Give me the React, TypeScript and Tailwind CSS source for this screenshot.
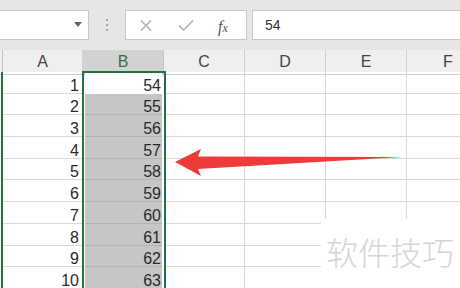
import React from "react";

const font = { fontFamily: '"Liberation Sans", Arial, sans-serif' };

const rows = [1, 2, 3, 4, 5, 6, 7, 8, 9, 10];

function Cell({ children, cls = "" }: { children?: React.ReactNode; cls?: string }) {
  return (
    <div
      className={`flex items-end justify-end border-b border-r border-[#d9d9d9] pr-[3px] text-[16px] leading-[14px] text-[#2a2a2a] ${cls}`}
    >
      {children}
    </div>
  );
}

export default function App() {
  return (
    <div className="relative h-[288px] w-[460px] overflow-hidden bg-white" style={font}>
      {/* Toolbar */}
      <div className="flex h-[50px] items-start bg-[#e6e6e6] pt-[10px]">
        <div className="relative h-[30px] w-[89px] border-y border-r border-[#c8c8c8] bg-white">
          <svg className="absolute left-[74px] top-[11px]" width="8" height="5" viewBox="0 0 8 5">
            <path d="M0 0H8L4 5Z" fill="#666" />
          </svg>
        </div>
        <div className="flex w-[36px] flex-col items-center gap-[3px] pt-[9px]">
          <div className="h-[2px] w-[2px] bg-[#a8a8a8]" />
          <div className="h-[2px] w-[2px] bg-[#a8a8a8]" />
          <div className="h-[2px] w-[2px] bg-[#a8a8a8]" />
        </div>
        <div className="relative h-[30px] w-[122px] border border-[#c8c8c8] bg-white">
          <svg className="absolute left-[14px] top-[9px]" width="12" height="11" viewBox="0 0 12 11">
            <path d="M1 0.5L11 10.5M11 0.5L1 10.5" stroke="#b4b4b4" strokeWidth="1.6" />
          </svg>
          <svg className="absolute left-[52px] top-[9px]" width="16" height="11" viewBox="0 0 16 11">
            <path d="M1 5.5L5.5 10L15 0.5" stroke="#b4b4b4" strokeWidth="1.6" fill="none" />
          </svg>
          <span
            className="absolute left-[92px] top-[4px] text-[16px] italic text-[#555]"
            style={{ fontFamily: '"Liberation Serif", "Times New Roman", serif' }}
          >
            f<span className="text-[12px]">x</span>
          </span>
        </div>
        <div className="ml-[5px] flex h-[30px] flex-1 items-center border-y border-l border-[#c8c8c8] bg-white pl-[12px] text-[14px] text-[#333]">
          54
        </div>
      </div>

      {/* Column headers */}
      <div className="grid h-[22px] grid-cols-[3px_80px_81px_81px_81px_81px_1fr] bg-[#efefef] text-[16px] text-[#444]">
        <div className="border-b border-r border-[#c6c6c6]" />
        <div className="flex items-center justify-center border-b border-r border-[#d0d0d0]">A</div>
        <div className="flex items-center justify-center border-b border-r border-[#c6c6c6] bg-[#d2d2d2] text-[#3a6e4c]">B</div>
        <div className="flex items-center justify-center border-b border-r border-[#d0d0d0]">C</div>
        <div className="flex items-center justify-center border-b border-r border-[#d0d0d0]">D</div>
        <div className="flex items-center justify-center border-b border-r border-[#d0d0d0]">E</div>
        <div className="flex items-center justify-start border-b border-[#d0d0d0] pl-[36px]">F</div>
      </div>

      {/* Rows */}
      <div className="flex flex-col">
        {rows.map((r) => (
          <div key={r} className="grid h-[21.7px] grid-cols-[3px_80px_81px_81px_81px_81px_1fr]">
            <div className="border-r-2 border-[#217346]" />
            <Cell>{r}</Cell>
            <div className="px-[2px]">
              <div
                className={`flex h-full items-end justify-end border-b pr-[1px] text-[16px] leading-[14px] text-[#2a2a2a] ${
                  r === 1 ? "border-transparent bg-white" : "border-[#b4b4b4] bg-[#c6c6c6]"
                }`}
              >
                {53 + r}
              </div>
            </div>
            <Cell />
            <Cell />
            <Cell />
            <div className="border-b border-[#d9d9d9]" />
          </div>
        ))}
      </div>

      {/* Selection border around column B */}
      <div className="pointer-events-none absolute left-[82px] top-[71px] h-[230px] w-[84px] border-2 border-[#217346]" />

      {/* Red arrow */}
      <svg className="pointer-events-none absolute left-0 top-0" width="460" height="288" viewBox="0 0 460 288">
        <path d="M175 162L201 149L198 156.5L402 157L198 169L201 176Z" fill="#ef3a3a" />
      </svg>

      {/* Watermark */}
      <div
        className="absolute left-[321px] top-[219px] flex h-[69px] w-[139px] items-start bg-white pl-[5px] pt-[14px] text-[32px] font-light leading-[36px] text-[#d6d6d6]"
        style={{ fontFamily: '"Noto Sans CJK SC", sans-serif' }}
      >
        软件技巧
      </div>
    </div>
  );
}
